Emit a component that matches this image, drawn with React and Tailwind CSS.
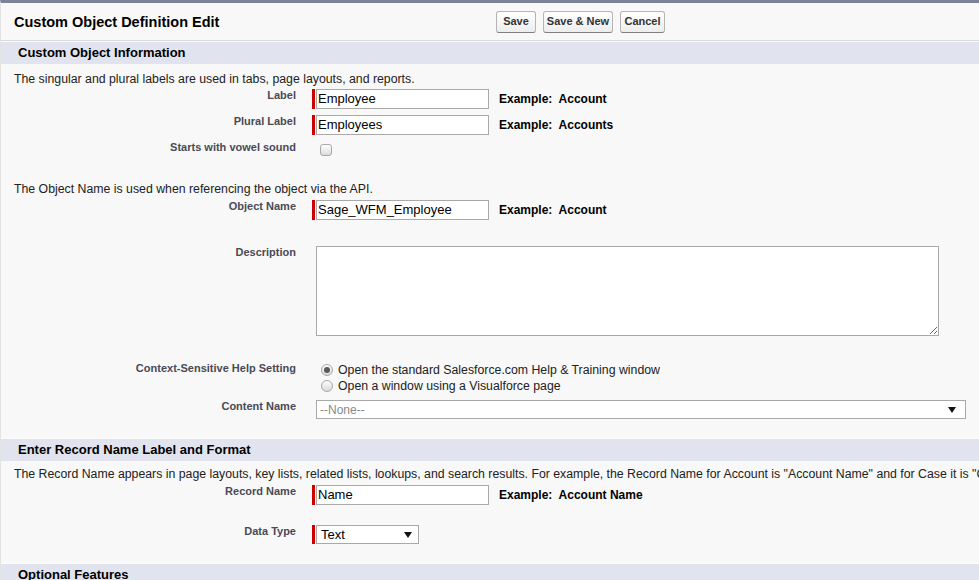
import React from 'react';

const font = "font-['Liberation_Sans',Arial,sans-serif]";

function SectionHeader({ title }) {
  return (
    <div className="h-[23px] bg-[#e1e4ee] border-t border-t-[#fbfbfb] flex items-center pl-[17px]">
      <span className="text-[13px] font-bold text-black">{title}</span>
    </div>
  );
}

function Label({ children }) {
  return (
    <div className="w-[295px] shrink-0 text-right text-[11px] leading-[13px] font-bold text-[#4a4a56]">
      {children}
    </div>
  );
}

function Required() {
  return <div className="w-[3px] self-stretch bg-[#c00] mr-[1px]" />;
}

function TextRow({ label, value, example, className = '' }) {
  return (
    <div className={`flex items-start ${className}`}>
      <Label>{label}</Label>
      <div className="ml-4 flex items-start">
        <div className="flex h-[20px]">
          <Required />
          <div className="w-[173px] h-[20px] bg-white border border-[#a9a9a9] text-[13px] leading-[18px] pl-[1px] text-black">
            {value}
          </div>
        </div>
        <div className="ml-[10px] text-[12px] leading-[20px] font-bold text-black whitespace-nowrap">
          Example:&nbsp; {example}
        </div>
      </div>
    </div>
  );
}

function Arrow() {
  return (
    <svg width="8" height="6" viewBox="0 0 8 6">
      <path d="M0 0 H8 L4 6 Z" fill="#111" />
    </svg>
  );
}

function Radio({ checked, children }) {
  return (
    <div className="flex items-center h-[16px]">
      <span className="w-[12px] h-[12px] rounded-full border border-[#a8a8a8] bg-gradient-to-b from-[#fdfdfd] to-[#dadada] flex items-center justify-center ml-[9px] mr-[5px]">
        {checked && <span className="w-[6px] h-[6px] rounded-full bg-[#5a5a5a]" />}
      </span>
      <span className="text-[12.3px] text-[#222] whitespace-nowrap">{children}</span>
    </div>
  );
}

export default function App() {
  return (
    <div className={`w-[979px] h-[580px] overflow-hidden bg-[#f8f8f8] border-t-[3px] border-t-[#7c8398] border-l border-l-[#e3e3e3] ${font}`}>
      {/* Page header */}
      <div className="h-[38px] flex items-center border-b border-b-[#d9d9d9]">
        <div className="w-[495px] pl-[13px] pt-[2px] text-[14.5px] font-bold text-black">Custom Object Definition Edit</div>
        <div className="flex gap-[7px]">
          {[['Save', 'w-[40px]'], ['Save & New', 'w-[70px]'], ['Cancel', 'w-[45px]']].map(([t, w]) => (
            <button
              key={t}
              className={`${w} h-[22px] rounded-[3px] border border-[#b5b5b5] border-b-[#7f7f7f] bg-gradient-to-b from-white to-[#ededed] text-[11px] font-bold text-[#333]`}
            >
              {t}
            </button>
          ))}
        </div>
      </div>

      <SectionHeader title="Custom Object Information" />

      <div className="pl-[13px] pt-[8px] text-[12.3px] leading-[14px] text-[#222]">
        The singular and plural labels are used in tabs, page layouts, and reports.
      </div>

      <TextRow className="mt-[3px]" label="Label" value="Employee" example="Account" />
      <TextRow className="mt-[6px]" label="Plural Label" value="Employees" example="Accounts" />

      <div className="flex items-start mt-[6px] h-[20px]">
        <Label>Starts with vowel sound</Label>
        <div className="ml-4 pl-[8px] pt-[3px]">
          <div className="w-[12px] h-[12px] rounded-[3px] border border-[#a8a8a8] bg-gradient-to-b from-white to-[#dcdcdc]" />
        </div>
      </div>

      <div className="pl-[13px] mt-[21px] text-[12.3px] leading-[14px] text-[#222]">
        The Object Name is used when referencing the object via the API.
      </div>

      <TextRow className="mt-[4px]" label="Object Name" value="Sage_WFM_Employee" example="Account" />

      <div className="flex items-start mt-[26px]">
        <Label>Description</Label>
        <div className="ml-4 pl-[4px]">
          <textarea className="block w-[623px] h-[90px] bg-white border border-[#a9a9a9] text-[13px] outline-none" />
        </div>
      </div>

      <div className="flex items-start mt-[26px]">
        <Label>Context-Sensitive Help Setting</Label>
        <div className="ml-4">
          <Radio checked>Open the standard Salesforce.com Help &amp; Training window</Radio>
          <Radio>Open a window using a Visualforce page</Radio>
        </div>
      </div>

      <div className="flex items-start mt-[6px]">
        <Label>Content Name</Label>
        <div className="ml-4 pl-[4px]">
          <div className="w-[650px] h-[19px] bg-white border border-[#a9a9a9] flex items-center justify-between pl-[3px] pr-[9px]">
            <span className="text-[12px] text-[#8a8a8a]">--None--</span>
            <Arrow />
          </div>
        </div>
      </div>

      <div className="mt-[19px]">
        <SectionHeader title="Enter Record Name Label and Format" />
      </div>

      <div className="pl-[13px] pt-[6px] text-[12.3px] leading-[14px] text-[#222] whitespace-nowrap">
        The Record Name appears in page layouts, key lists, related lists, lookups, and search results. For example, the Record Name for Account is "Account Name" and for Case it is "Case Number".
      </div>

      <TextRow className="mt-[4px]" label="Record Name" value="Name" example="Account Name" />

      <div className="flex items-start mt-[20px]">
        <Label>Data Type</Label>
        <div className="ml-4 flex h-[19px]">
          <Required />
          <div className="w-[103px] h-[19px] bg-white border border-[#a9a9a9] flex items-center justify-between pl-[4px] pr-[6px]">
            <span className="text-[13px] text-black">Text</span>
            <Arrow />
          </div>
        </div>
      </div>

      <div className="mt-[19px]">
        <SectionHeader title="Optional Features" />
      </div>
    </div>
  );
}
